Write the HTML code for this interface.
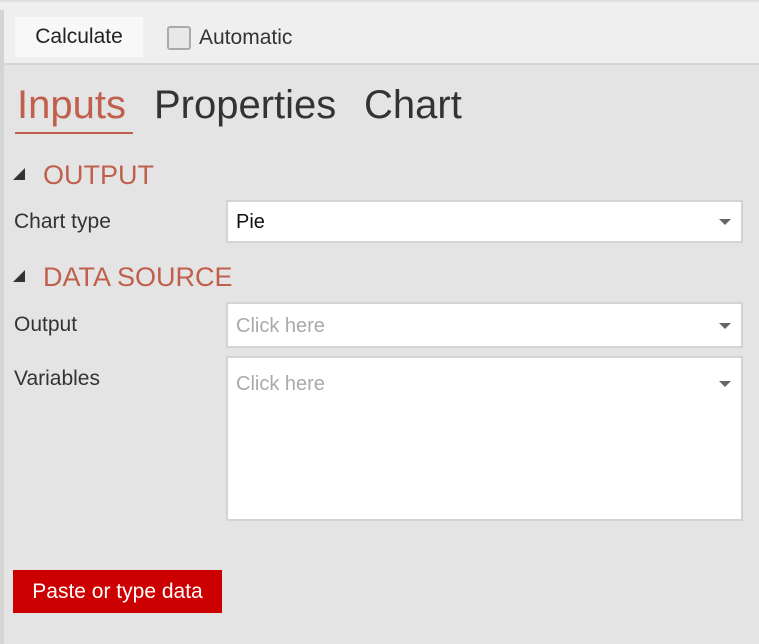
<!DOCTYPE html><html><head><style>
body{margin:0;width:759px;height:644px;background:#e4e4e4;font-family:"Segoe UI","Liberation Sans",sans-serif;position:relative;overflow:hidden}
.a{position:absolute}
.tb{left:0;top:0;width:759px;height:65px;background:#efefef;border-top:2px solid #e0e0e0;border-bottom:2px solid #d6d6d6;box-sizing:border-box}
.lb{left:0;top:10px;width:4px;height:634px;background:#d4d4d4}
.box{background:#fff;border:2px solid #d4d4d4;box-sizing:border-box;left:226px;width:517px;font-size:20px;color:#aaa;padding-left:8px}
.arr{position:absolute;right:10px;width:0;height:0;border-left:6px solid transparent;border-right:6px solid transparent;border-top:6px solid #666}
.sec{font-size:27px;color:#c0604c;left:43px}
.tri{left:13px;width:0;height:0;border-left:12px solid transparent;border-bottom:12px solid #333}
.lbl{left:14px;font-size:21px;color:#333}
</style></head><body>
<div class="a tb"></div>
<div class="a lb"></div>
<div class="a" style="left:15px;top:17px;width:128px;height:40px;background:#f8f8f8;font-size:21px;color:#222;line-height:40px;text-align:center">Calculate</div>
<div class="a" style="left:167px;top:26px;width:20px;height:20px;border:2px solid #aaa;border-radius:3px;background:#e8e8e8"></div>
<div class="a" style="left:199px;top:23px;font-size:21px;color:#333;line-height:30px">Automatic</div>
<div class="a" style="left:17px;top:80px;font-size:40px;color:#c0604c;font-weight:300;line-height:50px">Inputs</div>
<div class="a" style="left:15px;top:132px;width:118px;height:2px;background:#c0604c"></div>
<div class="a" style="left:154px;top:80px;font-size:40px;color:#333;font-weight:300;line-height:50px">Properties</div>
<div class="a" style="left:364px;top:80px;font-size:40px;color:#333;font-weight:300;line-height:50px">Chart</div>
<div class="a tri" style="top:168px"></div>
<div class="a sec" style="top:157px;line-height:36px">OUTPUT</div>
<div class="a lbl" style="top:208px;line-height:28px">Chart type</div>
<div class="a box" style="top:200px;height:43px;line-height:40px;color:#111">Pie<div class="arr" style="top:17px"></div></div>
<div class="a tri" style="top:270px"></div>
<div class="a sec" style="top:259px;line-height:36px">DATA SOURCE</div>
<div class="a lbl" style="top:311px;line-height:28px">Output</div>
<div class="a box" style="top:302px;height:46px;line-height:44px">Click here<div class="arr" style="top:19px"></div></div>
<div class="a lbl" style="top:365px;line-height:28px">Variables</div>
<div class="a box" style="top:356px;height:165px;line-height:52px">Click here<div class="arr" style="top:23px"></div></div>
<div class="a" style="left:13px;top:570px;width:209px;height:43px;background:#cc0000;color:#fff;font-size:21px;line-height:44px;text-align:center">Paste or type data</div>
</body></html>
